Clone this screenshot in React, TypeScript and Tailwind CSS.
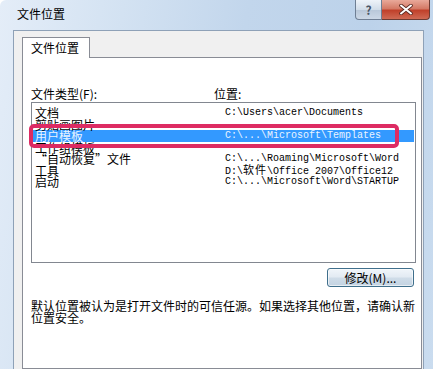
const cjk = "font-['Noto_Sans_CJK_SC','Noto_Sans',sans-serif]";

type Row = { name: string; path?: React.ReactNode; selected?: boolean };

const rows: Row[] = [
  { name: "文档", path: "C:\\Users\\acer\\Documents" },
  { name: "剪贴画图片" },
  { name: "用户模板", path: "C:\\...\\Microsoft\\Templates", selected: true },
  { name: "工作组模板" },
  { name: "“自动恢复”文件", path: "C:\\...\\Roaming\\Microsoft\\Word" },
  {
    name: "工具",
    path: (
      <>
        D:\<span className={`inline-block w-[12px] text-[11px] ${cjk}`}>软</span>
        <span className={`inline-block w-[12px] text-[11px] ${cjk}`}>件</span>\Office 2007\Office12
      </>
    ),
  },
  { name: "启动", path: "C:\\...\\Microsoft\\Word\\STARTUP" },
];

function ListRow({ row }: { row: Row }) {
  return (
    <div
      className={`mx-[1px] flex h-[11.5px] items-center px-[2px] ${
        row.selected ? "bg-[#3399ff] text-[#eaf4ff]" : "text-black"
      }`}
    >
      <span className={`w-[190px] shrink-0 whitespace-nowrap text-[12px] leading-[11.5px] ${cjk}`}>
        {row.name}
      </span>
      <span className="whitespace-pre font-['Liberation_Mono',monospace] text-[10px] leading-[11.5px]">
        {row.path}
      </span>
    </div>
  );
}

export default function App() {
  return (
    <div
      className={`relative flex h-[369px] w-[433px] flex-col overflow-hidden rounded-tl-[6px] bg-[linear-gradient(100deg,#e4edf8_0%,#d3e2f2_25%,#c2d6ec_50%,#bcd2ea_75%,#cadcef_100%)] ${cjk}`}
    >
      {/* title bar */}
      <div className="flex h-[30px] shrink-0 items-start justify-between">
        <span className="pl-[17px] pt-[7px] text-[12px] leading-[14px] text-black">文件位置</span>
        <div className="mr-[3px] flex">
          <div className="flex h-[20px] w-[27px] items-center justify-center rounded-bl-[4px] border border-t-0 border-[#6f7f94] bg-[linear-gradient(#eef3f9,#d2dde9_50%,#b8c7d8_51%,#ccd8e6)] text-[12px] font-bold leading-none text-[#4a5566]">
            ?
          </div>
          <div className="flex h-[20px] w-[48px] items-center justify-center rounded-br-[4px] border border-l-0 border-t-0 border-[#6b3b33] bg-[linear-gradient(#e9a99a,#d47a66_45%,#c0412b_55%,#cf6a54)]">
            <svg width="14" height="11" viewBox="0 0 14 11">
              <path d="M2 1.5 L12 9.5 M12 1.5 L2 9.5" stroke="#5a2a22" strokeWidth="3.6" strokeLinecap="round" />
              <path d="M2 1.5 L12 9.5 M12 1.5 L2 9.5" stroke="#ffffff" strokeWidth="2" strokeLinecap="round" />
            </svg>
          </div>
        </div>
      </div>

      {/* client area */}
      <div className="ml-[13px] mr-[9px] flex flex-1 flex-col border border-b-0 border-[#8ea1b7] bg-[#f0f0f0] pl-[8px] pr-[1px] pt-[6px]">
        <div className="relative z-10 -mb-px flex h-[21px] w-[68px] items-start border border-b-0 border-[#898c95] bg-white pl-[8px] pt-[3px]">
          <span className="text-[12px] leading-[14px] text-black">文件位置</span>
        </div>

        <div className="flex flex-1 flex-col border border-[#898c95] bg-white pl-[8px] pr-[5px] pt-[29px]">
          <div className="flex text-[12px] leading-[14px] text-black">
            <span className="w-[183px]">文件类型(F):</span>
            <span>位置:</span>
          </div>

          <div className="relative mt-[1px] h-[161px] border border-[#828790] bg-white pt-[4px]">
            {rows.map((r) => (
              <ListRow key={r.name} row={r} />
            ))}
            <div className="absolute left-[-3px] top-[21px] h-[24px] w-[370px] rounded-[5px] border-[4px] border-[#dd2b63]" />
          </div>

          <div className="mt-[5px] flex justify-end pr-[2px]">
            <div className="flex h-[19px] w-[87px] items-center justify-center rounded-[3px] border border-[#3f6f8c] bg-[linear-gradient(#f0f5fa,#e3ebf3_45%,#cfdce8_55%,#c3d3e2)] text-[12px] leading-none text-black shadow-[inset_0_0_0_1px_rgba(255,255,255,0.6)]">
              修改(M)...
            </div>
          </div>

          <p className="mt-[13px] whitespace-nowrap text-[12px] leading-[12px] text-black">
            默认位置被认为是打开文件时的可信任源。如果选择其他位置，请确认新
            <br />
            位置安全。
          </p>
        </div>
      </div>
    </div>
  );
}
